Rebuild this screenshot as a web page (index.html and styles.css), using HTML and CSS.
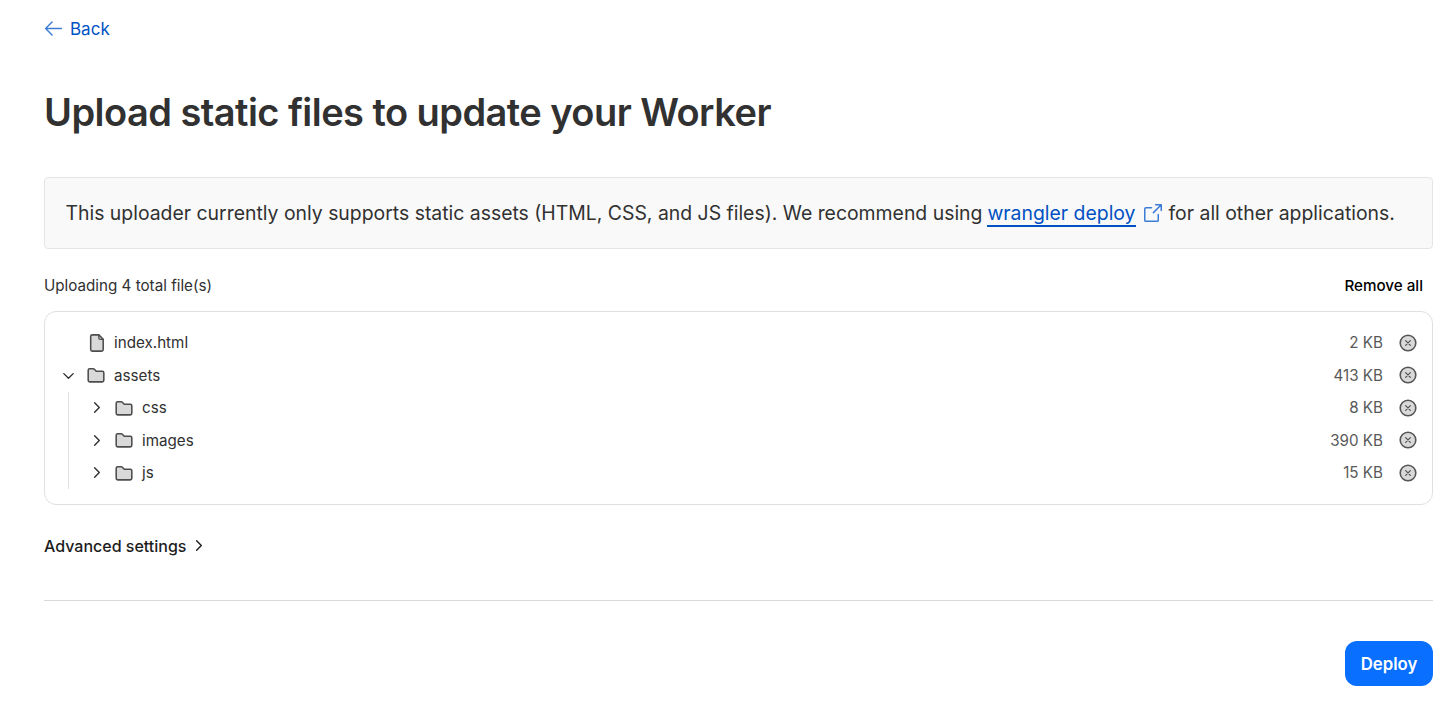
FILE: index.html
```html
<!DOCTYPE html>
<html lang="en">
<head>
  <meta charset="UTF-8" />
  <meta name="viewport" content="width=device-width, initial-scale=1.0"/>
  <title>Upload static files</title>
  <link rel="stylesheet" href="styles.css">
</head>
<body>
  <svg class="sprites" width="0" height="0">
    <symbol id="file" viewBox="0 0 256 256"><path class="duo" d="M60 44a20 20 0 0 1 20-20h84l56 56v132a20 20 0 0 1-20 20H80a20 20 0 0 1-20-20z"/><path class="thin" d="M164 24v40a16 16 0 0 0 16 16h40"/></symbol>
    <symbol id="folder" viewBox="0 0 256 256"><path class="duo" d="M28 196V68a20 20 0 0 1 20-20h44a20 20 0 0 1 15 6l24 26h77a20 20 0 0 1 20 20v96a20 20 0 0 1-20 20H48a20 20 0 0 1-20-20z"/></symbol>
    <symbol id="remove" viewBox="0 0 256 256"><circle class="duo" cx="128" cy="128" r="100"/><path class="thin" d="M98 98l60 60M158 98l-60 60"/></symbol>
    <symbol id="right" viewBox="0 0 256 256"><path class="line" d="M96 48l80 80-80 80"/></symbol>
    <symbol id="down" viewBox="0 0 256 256"><path class="line" d="M48 96l80 80 80-80"/></symbol>
  </svg>

  <a class="back" href="#">
    <svg class="icon-back" viewBox="0 0 256 256"><path class="thin" d="M216 128H40M112 56l-72 72 72 72"/></svg>
    Back
  </a>

  <h1>Upload static files to update your Worker</h1>

  <div class="notice">
    This uploader currently only supports static assets (HTML, CSS, and JS files). We recommend using
    <a href="#">wrangler deploy</a>
    <svg class="icon-out" viewBox="0 0 256 256"><path class="thin" d="M216 100V40h-60M216 40l-84 84M184 144v60a12 12 0 0 1-12 12H52a12 12 0 0 1-12-12V84a12 12 0 0 1 12-12h60"/></svg>
    for all other applications.
  </div>

  <div class="list-head">
    <span>Uploading 4 total file(s)</span>
    <button class="remove-all">Remove all</button>
  </div>

  <div class="tree">
    <div class="row">
      <span class="caret"></span>
      <svg class="icon"><use href="#file"/></svg>
      <span class="name">index.html</span>
      <span class="size">2 KB</span>
      <svg class="icon-x"><use href="#remove"/></svg>
    </div>
    <div class="row">
      <svg class="caret"><use href="#down"/></svg>
      <svg class="icon"><use href="#folder"/></svg>
      <span class="name">assets</span>
      <span class="size">413 KB</span>
      <svg class="icon-x"><use href="#remove"/></svg>
    </div>
    <div class="children">
      <div class="row">
        <svg class="caret"><use href="#right"/></svg>
        <svg class="icon"><use href="#folder"/></svg>
        <span class="name">css</span>
        <span class="size">8 KB</span>
        <svg class="icon-x"><use href="#remove"/></svg>
      </div>
      <div class="row">
        <svg class="caret"><use href="#right"/></svg>
        <svg class="icon"><use href="#folder"/></svg>
        <span class="name">images</span>
        <span class="size">390 KB</span>
        <svg class="icon-x"><use href="#remove"/></svg>
      </div>
      <div class="row">
        <svg class="caret"><use href="#right"/></svg>
        <svg class="icon"><use href="#folder"/></svg>
        <span class="name">js</span>
        <span class="size">15 KB</span>
        <svg class="icon-x"><use href="#remove"/></svg>
      </div>
    </div>
  </div>

  <div class="advanced">
    Advanced settings
    <svg class="caret"><use href="#right"/></svg>
  </div>

  <hr class="divider" />

  <div class="actions">
    <button class="deploy">Deploy</button>
  </div>
</body>
</html>
```

FILE: styles.css
```css
body {
  margin: 0;
  padding: 0 17px 0 44px;
  font-family: Inter, sans-serif;
  background: #fff;
  color: #313131;
}

.sprites {
  display: block;
  height: 0;
}

.line {
  fill: none;
  stroke: currentColor;
  stroke-width: 24;
  stroke-linecap: round;
  stroke-linejoin: round;
}

.thin {
  fill: none;
  stroke: currentColor;
  stroke-width: 16;
  stroke-linecap: round;
  stroke-linejoin: round;
}

.duo {
  fill: #d9d9d9;
  stroke: currentColor;
  stroke-width: 20;
  stroke-linejoin: round;
}

.back {
  display: flex;
  align-items: center;
  gap: 5px;
  height: 57px;
  font-size: 17px;
  color: #0051c3;
  text-decoration: none;
}

.icon-back {
  width: 23px;
  height: 23px;
  margin-left: -2px;
  color: #3c7cd6;
}

h1 {
  margin: 30px 0 0;
  font-size: 38px;
  line-height: 50px;
  font-weight: 600;
  letter-spacing: -0.55px;
}

.notice {
  margin-top: 40px;
  height: 70px;
  padding: 0 20px 0 20.5px;
  display: flex;
  align-items: center;
  gap: 5px;
  background: #f9f9f9;
  border: 1px solid #e5e5e5;
  border-radius: 4px;
  font-size: 19.4px;
  white-space: nowrap;
}

.notice a {
  padding-top: 2px;
  color: #0051c3;
  text-decoration: none;
  border-bottom: 2px solid #0051c3;
}

.icon-out {
  width: 24px;
  height: 24px;
  color: #3c7cd6;
  margin: 0 -1.5px 0 0.5px;
}

.list-head {
  margin-top: 25px;
  display: flex;
  justify-content: space-between;
  align-items: center;
  height: 22px;
  font-size: 15.2px;
}

.remove-all {
  border: none;
  background: none;
  padding: 0 10px 0 0;
  font: 500 15.2px Inter, sans-serif;
  color: #000;
}

.tree {
  margin-top: 15px;
  padding: 14.5px 14px 14.5px 16px;
  border: 1px solid #e0e0e0;
  border-radius: 12px;
}

.row {
  display: flex;
  align-items: center;
  height: 32.5px;
  font-size: 15.2px;
}

.caret {
  width: 15px;
  height: 15px;
  flex: none;
}

.icon {
  width: 20px;
  height: 20px;
  margin-left: 10px;
  color: #4d4d4d;
  flex: none;
}

.name {
  margin-left: 8px;
}

.size {
  margin-left: auto;
  color: #595959;
}

.icon-x {
  width: 20px;
  height: 20px;
  margin-left: 15px;
  color: #555;
  flex: none;
}

.children {
  margin-left: 7px;
  padding-left: 20px;
  border-left: 1px solid #e0e0e0;
}

.advanced {
  margin-top: 29px;
  display: flex;
  align-items: center;
  gap: 5px;
  height: 24px;
  font-size: 16px;
  font-weight: 500;
  color: #1d1d1d;
}

.divider {
  margin: 42px 0 0;
  border: none;
  border-top: 1px solid #d9d9d9;
}

.actions {
  margin-top: 40px;
  display: flex;
  justify-content: flex-end;
}

.deploy {
  width: 88px;
  height: 45px;
  padding: 1px 0 0;
  border: none;
  border-radius: 12px;
  background: #086fff;
  color: #fff;
  font: 600 16.8px Inter, sans-serif;
}
```
